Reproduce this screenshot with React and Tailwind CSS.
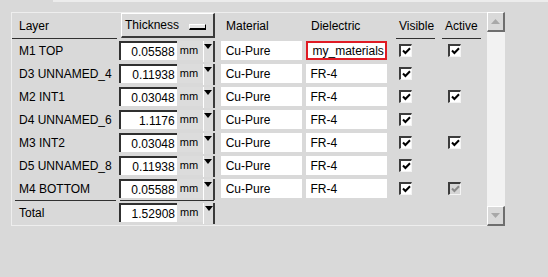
import React from 'react';

const rows = [
  { name: 'M1 TOP', t: '0.05588', mat: 'Cu-Pure', die: 'my_materials', act: 'on', hl: true },
  { name: 'D3 UNNAMED_4', t: '0.11938', mat: 'Cu-Pure', die: 'FR-4', act: null },
  { name: 'M2 INT1', t: '0.03048', mat: 'Cu-Pure', die: 'FR-4', act: 'on' },
  { name: 'D4 UNNAMED_6', t: '1.1176', mat: 'Cu-Pure', die: 'FR-4', act: null },
  { name: 'M3 INT2', t: '0.03048', mat: 'Cu-Pure', die: 'FR-4', act: 'on' },
  { name: 'D5 UNNAMED_8', t: '0.11938', mat: 'Cu-Pure', die: 'FR-4', act: null },
  { name: 'M4 BOTTOM', t: '0.05588', mat: 'Cu-Pure', die: 'FR-4', act: 'off' },
];

const Check = ({ disabled }) => (
  <div
    className={`w-[13px] h-[13px] flex items-center justify-center border-t-2 border-l-2 border-t-[#3c3c3c] border-l-[#3c3c3c] border-r border-b border-r-[#f4f4f4] border-b-[#f4f4f4] ${
      disabled ? 'bg-[#d6d6d6]' : 'bg-white'
    }`}
  >
    <svg width="9" height="8" viewBox="0 0 9 8">
      <path
        d="M1 3.5 L3.4 6 L8 1.2"
        fill="none"
        stroke={disabled ? '#8a8a8a' : '#000'}
        strokeWidth="2"
      />
    </svg>
  </div>
);

const Thickness = ({ value }) => (
  <div className="w-[96px] h-[19px] flex">
    {/* sunken white field */}
    <div className="w-[58px] h-full bg-white border-t-2 border-l-2 border-t-[#303030] border-l-[#303030] flex items-center justify-end pr-[2px] leading-none">
      {value}
    </div>
    <div className="w-[26px] h-full bg-[#dcdcdc] flex items-center pl-[3px] text-[11px] leading-none">
      mm
    </div>
    <div className="w-[12px] h-[21px] bg-[#dcdcdc] border-l border-l-white border-r-2 border-r-[#3a3a3a] flex justify-center pt-[3px]">
      <svg width="8" height="5" viewBox="0 0 8 5">
        <path d="M0 0 H8 L4 5 Z" fill="#000" />
      </svg>
    </div>
  </div>
);

const ScrollBtn = ({ up }) => (
  <div className="h-[20px] bg-[#d9d9d9] border-t border-l border-t-white border-l-white border-r-2 border-b-2 border-r-[#6e6e6e] border-b-[#6e6e6e] flex items-center justify-center">
    <svg width="9" height="5" viewBox="0 0 9 5">
      <path d={up ? 'M0 5 H9 L4.5 0 Z' : 'M0 0 H9 L4.5 5 Z'} fill="#a8a8a8" />
    </svg>
  </div>
);

export default function App() {
  return (
    <div className="w-[548px] h-[277px] bg-[#d9d9d9] overflow-hidden text-[12px] text-black font-['Liberation_Sans',Arial,sans-serif]">
      <div className="ml-[53px] h-[2px] bg-[#ececec]" />

      <div className="ml-[11px] mt-[10px] flex">
        <div className="w-[476px] h-[214px] border-t border-l border-b border-[#eeeeee] flex flex-col">
          {/* header */}
          <div className="h-[26px] flex">
            <div className="w-[105px] border-b border-[#303030] flex items-center pl-[7px]">Layer</div>
            <div className="w-[2px]" />
            <div className="w-[96px] pl-[2px]">
              <div className="h-[25px] border-t border-l border-t-white border-l-white border-r-2 border-b-2 border-r-[#3a3a3a] border-b-[#3a3a3a] flex items-center pl-[3px] pr-[7px] justify-between">
                <span>Thickness</span>
                <div className="w-[17px] h-[6px] mt-[3px] bg-[#e6e6e6] border-t border-l border-white border-r border-b-2 border-r-black border-b-black" />
              </div>
            </div>
            <div className="w-[6px]" />
            <div className="w-[82px] flex items-center pl-[5px]">Material</div>
            <div className="w-[4px]" />
            <div className="w-[81px] flex items-center pl-[4px]">Dielectric</div>
            <div className="w-[8px]" />
            <div className="w-[39px] border-b border-[#303030] flex items-center pl-[3px]">Visible</div>
            <div className="w-[7px]" />
            <div className="w-[39px] border-b border-[#303030] flex items-center pl-[3px]">Active</div>
          </div>

          {/* layers */}
          {rows.map((r) => (
            <div key={r.name} className="h-[23px] flex items-center">
              <div className="w-[107px] pl-[7px]">{r.name}</div>
              <Thickness value={r.t} />
              <div className="w-[6px]" />
              <div className="w-[82px] h-[19px] bg-white flex items-center pl-[5px]">{r.mat}</div>
              <div className="w-[4px]" />
              <div
                className={`w-[81px] h-[19px] bg-white flex items-center pl-[4px] ${
                  r.hl ? 'border-2 border-[#e01b24] pl-[2px]' : ''
                }`}
              >
                {r.die}
              </div>
              <div className="w-[12px]" />
              <div className="w-[46px]">
                <Check />
              </div>
              <div className="w-[3px]" />
              <div className="w-[39px]">{r.act && <Check disabled={r.act === 'off'} />}</div>
            </div>
          ))}

          {/* total */}
          <div className="h-[1px] flex">
            <div className="ml-[3px] w-[101px] bg-[#303030]" />
            <div className="ml-[4px] w-[94px] bg-[#303030]" />
          </div>
          <div className="h-[23px] flex items-center">
            <div className="w-[107px] pl-[7px]">Total</div>
            <Thickness value="1.52908" />
          </div>
        </div>

        {/* scrollbar */}
        <div className="w-[18px] h-[214px] flex flex-col">
          <ScrollBtn up />
          <div className="flex-1 bg-[#f2f2f2]" />
          <ScrollBtn />
        </div>
      </div>
    </div>
  );
}
